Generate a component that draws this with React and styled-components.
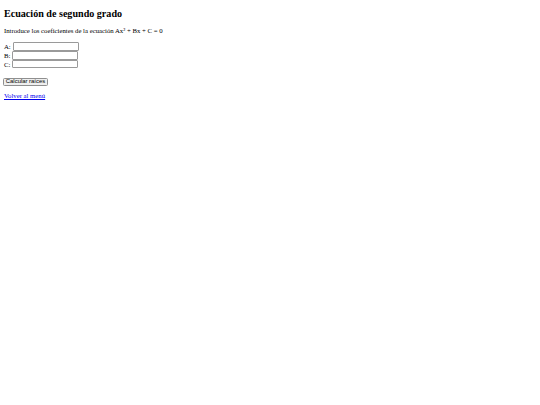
import React from "react";
import styled, { createGlobalStyle } from "styled-components";

const Global = createGlobalStyle`
  html, body { background: #fff; }
  body {
    margin: 0;
    font-family: "Liberation Serif", "Times New Roman", serif;
    font-size: 6.75px;
    color: #000;
  }
`;

const Page = styled.div`
  padding: 8.4px 4px 0;
`;

const Title = styled.h1`
  font-size: 10.1px;
  font-weight: bold;
  margin: 0 0 8px;
  line-height: 11px;
`;

const Text = styled.p`
  margin: ${(p) => p.$before || 0}px 0 ${(p) => p.$after || 0}px;
  line-height: 7.6px;
`;

const Form = styled.form`
  margin: 0;
  display: flex;
  flex-direction: column;
  align-items: flex-start;
`;

const Row = styled.div`
  display: flex;
  align-items: center;
  height: 8.7px;
  white-space: pre;
`;

const Field = styled.input`
  box-sizing: border-box;
  width: 66.5px;
  height: 8.6px;
  margin: 0 0 0 ${(p) => p.$offset || 0}px;
  padding: 0 1px;
  border: 1px solid #9a9a9a;
  border-radius: 1px;
  font-size: 5.5px;
  background: #fff;
`;

const Button = styled.button`
  box-sizing: border-box;
  width: 45px;
  height: 8.2px;
  padding: 0;
  margin: 9.5px 0 0 -1px;
  font-family: "Liberation Sans", Arial, sans-serif;
  font-size: 5.9px;
  line-height: 1;
  color: #000;
  background: #efefef;
  border: 1px solid #8f8f8f;
  border-radius: 1.5px;
`;

const Link = styled.a`
  color: #0000ee;
  text-decoration: underline;
`;

export default function App() {
  return (
    <Page>
      <Global />
      <Title>Ecuación de segundo grado</Title>
      <Text $after={7.4}>Introduce los coeficientes de la ecuación Ax² + Bx + C = 0</Text>
      <Form onSubmit={(e) => e.preventDefault()}>
        <Row>A:<Field type="text" $offset={1.8} /></Row>
        <Row>B:<Field type="text" $offset={1.6} /></Row>
        <Row>C:<Field type="text" $offset={1.4} /></Row>
        <Button type="submit">Calcular raíces</Button>
      </Form>
      <Text $before={6}>
        <Link href="#">Volver al menú</Link>
      </Text>
    </Page>
  );
}
